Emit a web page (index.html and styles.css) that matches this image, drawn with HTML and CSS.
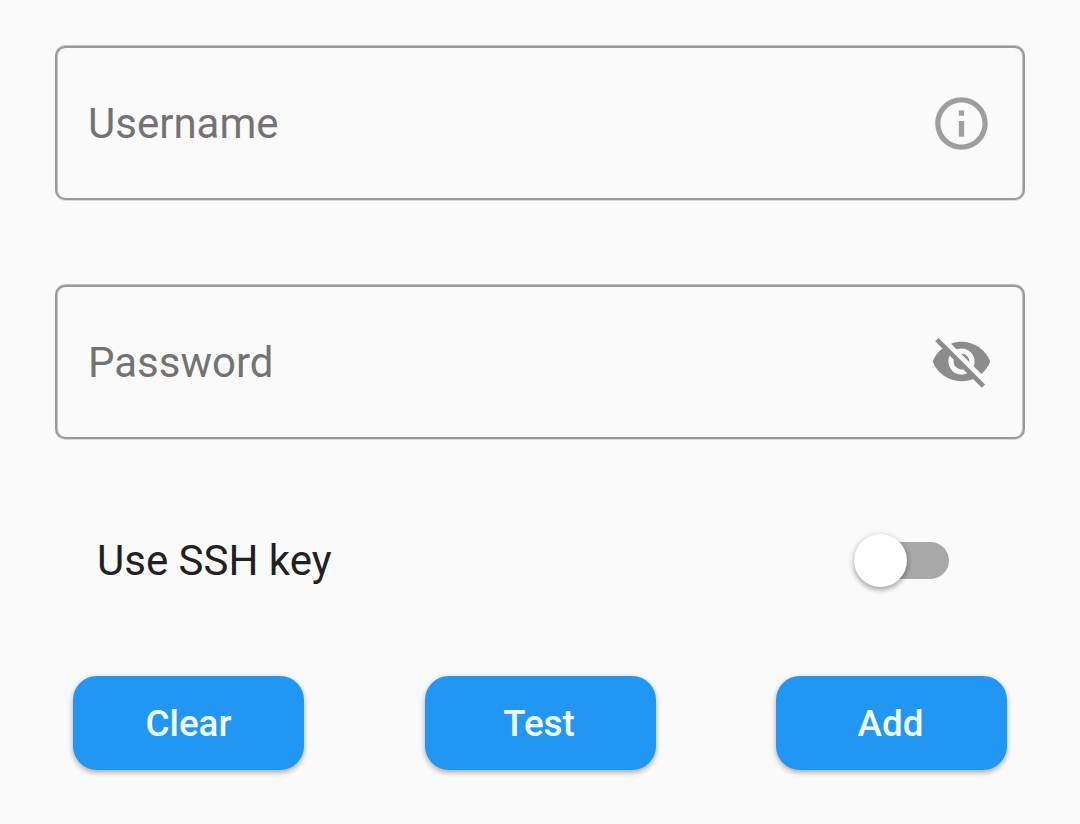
FILE: index.html
```html
<!DOCTYPE html>
<html lang="en">
<head>
<meta charset="utf-8">
<title>Credentials</title>
<link rel="stylesheet" href="styles.css">
</head>
<body>
<main class="form">
  <div class="field">
    <span class="field-label">Username</span>
    <svg class="field-icon info" viewBox="0 0 24 24"><path d="M11 7h2v2h-2zm0 4h2v6h-2zm1-9C6.48 2 2 6.48 2 12s4.48 10 10 10 10-4.48 10-10S17.52 2 12 2zm0 18c-4.41 0-8-3.59-8-8s3.59-8 8-8 8 3.59 8 8-3.59 8-8 8z"/></svg>
  </div>
  <div class="field">
    <span class="field-label">Password</span>
    <svg class="field-icon eye" viewBox="0 0 24 24"><path d="M12 7c2.76 0 5 2.24 5 5 0 .65-.13 1.26-.36 1.83l2.92 2.92c1.51-1.26 2.7-2.89 3.43-4.75-1.73-4.39-6-7.5-11-7.5-1.4 0-2.74.25-3.98.7l2.16 2.16C10.74 7.13 11.35 7 12 7zM2 4.27l2.28 2.28.46.46C3.08 8.3 1.78 10.02 1 12c1.73 4.39 6 7.5 11 7.5 1.55 0 3.03-.3 4.38-.84l.42.42L19.73 22 21 20.73 3.27 3 2 4.27zM7.53 9.8l1.55 1.55c-.05.21-.08.43-.08.65 0 1.66 1.34 3 3 3 .22 0 .44-.03.65-.08l1.55 1.55c-.67.33-1.41.53-2.2.53-2.76 0-5-2.24-5-5 0-.79.2-1.53.53-2.2zm4.31-.78l3.15 3.15.02-.16c0-1.66-1.34-3-3-3l-.17.01z"/></svg>
  </div>
  <div class="switch-row">
    <span class="switch-label">Use SSH key</span>
    <span class="switch"><span class="thumb"></span></span>
  </div>
  <div class="actions">
    <button class="button">Clear</button>
    <button class="button">Test</button>
    <button class="button">Add</button>
  </div>
</main>
</body>
</html>
```

FILE: styles.css
```css
* { box-sizing: border-box; }
body {
  margin: 0;
  background: #fafafa;
  font-family: Roboto, sans-serif;
}
.form {
  height: 824px;
  padding: 46px 55px 0;
  display: flex;
  flex-direction: column;
}
.field {
  height: 154px;
  margin-bottom: 85px;
  padding: 0 30px 0 31px;
  border: 2px solid #999;
  border-radius: 10px;
  box-shadow:
    inset 1px 0 rgba(153, 153, 153, .6),
    inset -1px 0 rgba(153, 153, 153, .6),
    0 -1px rgba(153, 153, 153, .6),
    0 1px rgba(153, 153, 153, .3);
  display: flex;
  align-items: center;
  justify-content: space-between;
}
.field-label {
  padding-top: 2px;
  color: #737373;
  font-size: 42px;
  line-height: 50px;
}
.field-icon {
  width: 63px;
  height: 63px;
}
.info { fill: #9e9e9e; }
.eye {
  margin-bottom: 1px;
  fill: #8c8c8c;
}
.switch-row {
  height: 60px;
  margin: 6px 76px 0 42px;
  display: flex;
  align-items: center;
  justify-content: space-between;
}
.switch-label {
  padding-top: 2px;
  color: #212121;
  font-size: 42px;
  line-height: 50px;
}
.switch {
  width: 87px;
  height: 37px;
  border-radius: 19px;
  background: #a8a8a8;
  display: flex;
  align-items: center;
}
.thumb {
  flex: none;
  width: 53px;
  height: 53px;
  margin-left: -8px;
  border-radius: 50%;
  background: #fff;
  box-shadow: 0 3px 5px rgba(0, 0, 0, .25), 0 1px 7px rgba(0, 0, 0, .16);
}
.actions {
  margin: 86px 18px 0;
  display: flex;
  justify-content: space-between;
}
.button {
  width: 231px;
  height: 94px;
  padding: 2px 2px 0 0;
  border: 0;
  border-radius: 24px;
  background: #2196f3;
  color: #f2ffff;
  font: 500 36.75px/44px Roboto, sans-serif;
  box-shadow: 0 3px 5px rgba(0, 0, 0, .22), 0 1px 6px rgba(0, 0, 0, .12);
}
.button:first-child { padding-right: 0; }
```
